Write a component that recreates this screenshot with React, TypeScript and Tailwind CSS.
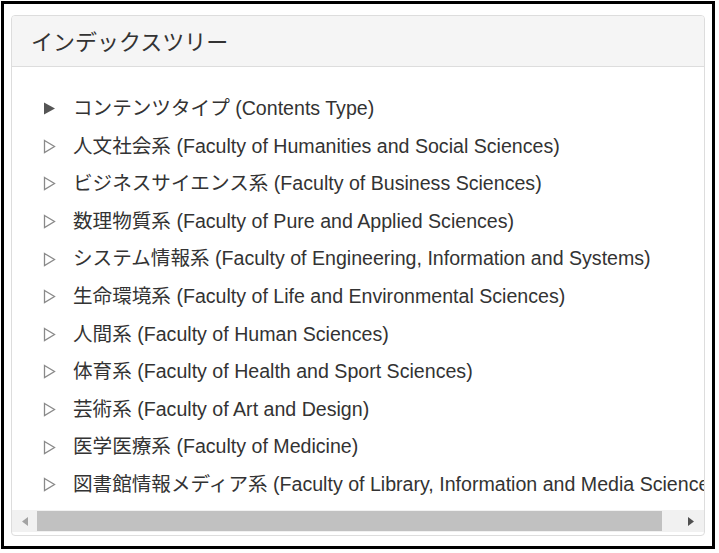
import React from 'react';

const items = [
  { label: 'コンテンツタイプ (Contents Type)', open: true },
  { label: '人文社会系 (Faculty of Humanities and Social Sciences)' },
  { label: 'ビジネスサイエンス系 (Faculty of Business Sciences)' },
  { label: '数理物質系 (Faculty of Pure and Applied Sciences)' },
  { label: 'システム情報系 (Faculty of Engineering, Information and Systems)' },
  { label: '生命環境系 (Faculty of Life and Environmental Sciences)' },
  { label: '人間系 (Faculty of Human Sciences)' },
  { label: '体育系 (Faculty of Health and Sport Sciences)' },
  { label: '芸術系 (Faculty of Art and Design)' },
  { label: '医学医療系 (Faculty of Medicine)' },
  { label: '図書館情報メディア系 (Faculty of Library, Information and Media Sciences)' },
];

const Arrow: React.FC<{ filled?: boolean }> = ({ filled }) => (
  <svg width="13" height="15" viewBox="0 0 13 15" className="shrink-0">
    {filled ? (
      <polygon points="1,1.5 12,7.5 1,13.5" fill="#555555" />
    ) : (
      <polygon points="1.5,1.5 11.5,7.5 1.5,13.5" fill="none" stroke="#8a8a8a" strokeWidth="1.3" />
    )}
  </svg>
);

const App: React.FC = () => {
  return (
    <div className="w-[719px] h-[553px] bg-white pt-px pl-px">
      <div className="w-[714px] h-[548px] border-[3px] border-black px-[7px] pt-[11px] pb-[10px]">
        <div
          className="h-full flex flex-col border border-[#dddddd] rounded-[4px] overflow-hidden bg-white text-[#333333]"
          style={{ fontFamily: '"Liberation Sans", Arial, "Noto Sans CJK JP", sans-serif' }}
        >
          {/* Header */}
          <div className="h-[51px] shrink-0 bg-[#f5f5f5] border-b border-[#dddddd] flex items-center pl-[19px] pt-[2px] text-[22px]">
            インデックスツリー
          </div>

          {/* Tree */}
          <div className="flex-1 overflow-hidden pt-[23px] pl-[31px]">
            {items.map((item, i) => (
              <div key={i} className="h-[37.6px] flex items-center whitespace-nowrap text-[19.6px]">
                <Arrow filled={item.open} />
                <span className="ml-[17px]">{item.label}</span>
              </div>
            ))}
          </div>

          {/* Scrollbar */}
          <div className="h-[22px] shrink-0 bg-[#f1f1f1] flex items-center mb-[3px]">
            <div className="w-[25px] h-full flex items-center justify-center">
              <svg width="6" height="9" viewBox="0 0 6 9">
                <polygon points="6,0 0,4.5 6,9" fill="#a3a3a3" />
              </svg>
            </div>
            <div className="w-[625px] h-[20px] bg-[#c1c1c1]" />
            <div className="flex-1" />
            <div className="w-[26px] h-full flex items-center justify-center">
              <svg width="6" height="9" viewBox="0 0 6 9">
                <polygon points="0,0 6,4.5 0,9" fill="#505050" />
              </svg>
            </div>
          </div>
        </div>
      </div>
    </div>
  );
};

export default App;
